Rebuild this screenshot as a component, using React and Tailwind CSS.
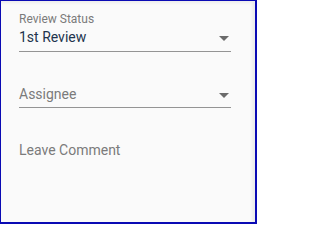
import React from 'react'

const Arrow = () => (
  <svg viewBox="0 0 24 24" className="w-6 h-6 shrink-0 fill-[#6b6b6b]">
    <path d="M7 10l5 5 5-5z" />
  </svg>
)

const SelectField = ({ label, value, placeholder }) => (
  <div className="flex flex-col">
    {label && <span className="text-[12px] leading-[14px] text-[#7b7b7b] mb-[1px]">{label}</span>}
    <div className={`flex items-start justify-between border-b border-[#949494] ${label ? 'h-[25px]' : 'h-[24px]'}`}>
      <span className={`text-[14px] leading-[20px] ${value ? 'text-[#22344d]' : 'text-[#7b7b7b]'}`}>
        {value || placeholder}
      </span>
      <div className="-mr-[5px] -mt-[1px]">
        <Arrow />
      </div>
    </div>
  </div>
)

export default function App() {
  return (
    <div className="w-[257px] h-[224px] border-[#0a0ab4] border-t border-l border-r-2 border-b-2 bg-[#fafafa] shadow-[inset_-3px_2px_3px_rgba(0,0,0,0.06)] font-['Roboto',sans-serif]">
      <div className="pl-[18px] pr-[24px] pt-[11px] flex flex-col">
        <SelectField label="Review Status" value="1st Review" />
        <div className="mt-[32px]">
          <SelectField placeholder="Assignee" />
        </div>
        <span className="mt-[32px] text-[14px] leading-[20px] text-[#7b7b7b]">Leave Comment</span>
      </div>
    </div>
  )
}
